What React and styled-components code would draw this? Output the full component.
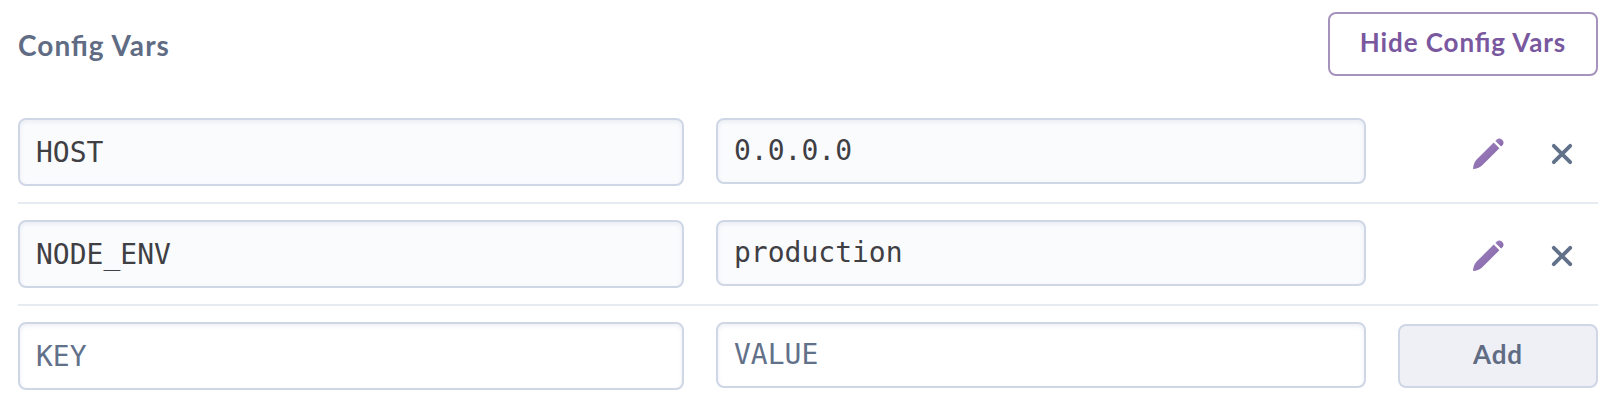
import React from "react";
import styled, { createGlobalStyle } from "styled-components";

const GlobalStyle = createGlobalStyle`
  *, *::before, *::after { box-sizing: border-box; }
  body { margin: 0; background: #fff; overflow: hidden; }
`;

const Panel = styled.main`
  width: 1608px;
  height: 402px;
  padding: 12px 10px 0 18px;
  background: #fff;
  font-family: Lato, "Open Sans", sans-serif;
`;

const Header = styled.header`
  display: flex;
  justify-content: space-between;
  align-items: flex-start;
  height: 90px;
`;

const Title = styled.h2`
  margin: 0;
  padding-top: 16px;
  font-size: 28px;
  line-height: 34px;
  font-weight: 700;
  letter-spacing: 1.05px;
  font-feature-settings: "liga" 1;
  color: #5f6c84;
`;

const Button = styled.button`
  flex: none;
  width: ${(p) => p.$width}px;
  height: 64px;
  padding: 0 0 4px;
  border: 2px solid ${(p) => (p.$outlined ? "#a593bd" : "#cfd7e6")};
  border-radius: 8px;
  background: ${(p) => (p.$outlined ? "#fff" : "#eff0f6")};
  color: ${(p) => (p.$outlined ? "#79589f" : "#5f6c84")};
  font-family: inherit;
  font-size: 26px;
  font-weight: 700;
  line-height: 32px;
  letter-spacing: 0.9px;
  font-feature-settings: "liga" 1;
`;

const Row = styled.div`
  display: grid;
  grid-template-columns: 666px 650px 200px;
  column-gap: 32px;
  align-items: start;
  height: 102px;
  padding-top: 16px;
  border-bottom: ${(p) => (p.$last ? "none" : "2px solid #e6eaf1")};
`;

const Field = styled.input`
  width: 100%;
  height: ${(p) => p.$height}px;
  padding: 0 16px ${(p) => (p.$height === 66 ? 2 : 0)}px;
  border: 2px solid #cfd7e6;
  border-radius: 8px;
  outline: none;
  background: ${(p) => (p.readOnly ? "#fafbfd" : "#fff")};
  box-shadow: inset 0 2px 4px rgba(207, 215, 230, 0.4);
  color: #3f3f44;
  font-family: "DejaVu Sans Mono", monospace;
  font-size: 28px;
  &::placeholder { color: #62718a; opacity: 1; }
`;

const Actions = styled.div`
  display: flex;
  justify-content: flex-end;
  gap: 42px;
  padding: 19px 20px 0 0;
`;

const AddSlot = styled.div`
  padding-top: 2px;
`;

const IconButton = styled.button`
  display: block;
  width: 32px;
  height: 32px;
  margin: 0;
  padding: 0;
  border: 0;
  background: none;
  svg { display: block; }
`;

const PencilIcon = () => (
  <svg width="32" height="32" viewBox="0 0 32 32">
    <defs>
      <linearGradient id="pencil" x1="0" y1="0" x2="1" y2="1">
        <stop offset="0" stopColor="#a184c2" />
        <stop offset="1" stopColor="#8263a5" />
      </linearGradient>
    </defs>
    <g fill="url(#pencil)">
      <path d="M1 32 C1.2 28.6 2.1 25.4 4.4 22.8 L21.7 5.5 L27.4 11.2 L10 28.5 C7.4 30.8 4.4 31.8 1 32 Z" />
      <path d="M23.4 3.9 L25 2.3 C26.4 1 28.5 1.2 30.1 2.8 C31.8 4.5 32 6.6 30.7 8 L29.1 9.6 Z" />
    </g>
  </svg>
);

const CloseIcon = () => (
  <svg width="32" height="32" viewBox="0 0 32 32">
    <path d="M7.8 8.8 L24.2 25.2 M24.2 8.8 L7.8 25.2" fill="none" stroke="#62718a" strokeWidth="3.8" strokeLinecap="round" />
  </svg>
);

const vars = [
  { name: "HOST", value: "0.0.0.0" },
  { name: "NODE_ENV", value: "production" },
];

export default function App() {
  return (
    <>
      <GlobalStyle />
      <Panel>
        <Header>
          <Title>Config Vars</Title>
          <Button $outlined $width={270}>Hide Config Vars</Button>
        </Header>
        {vars.map((item) => (
          <Row key={item.name}>
            <Field $height={68} readOnly value={item.name} aria-label="Key" />
            <Field $height={66} readOnly value={item.value} aria-label="Value" />
            <Actions>
              <IconButton aria-label="Edit"><PencilIcon /></IconButton>
              <IconButton aria-label="Remove"><CloseIcon /></IconButton>
            </Actions>
          </Row>
        ))}
        <Row $last>
          <Field $height={68} placeholder="KEY" aria-label="New key" />
          <Field $height={66} placeholder="VALUE" aria-label="New value" />
          <AddSlot><Button $width={200}>Add</Button></AddSlot>
        </Row>
      </Panel>
    </>
  );
}
